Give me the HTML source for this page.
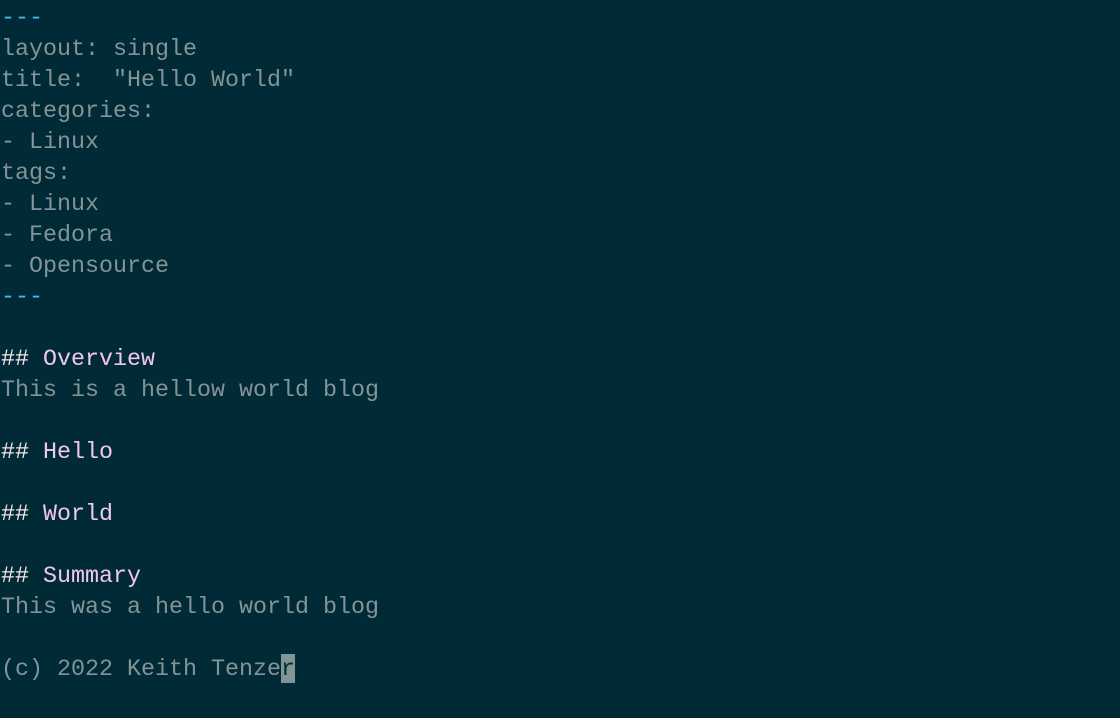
<!DOCTYPE html>
<html><head><meta charset="utf-8"><style>
html,body{margin:0;padding:0;background:#002b36;width:1120px;height:718px;overflow:hidden}
pre{margin:0;position:absolute;left:1px;top:4px;font-family:"Liberation Mono",monospace;font-size:23.33px;line-height:31px;color:#839496}
.b{color:#4fb8e8}.w{color:#f5e6e8}.p{color:#f2c6f2}
.c{background:#839496;color:#002b36;padding-top:3px}
</style></head><body><pre><span class="b">---</span>
layout: single
title:  "Hello World"
categories:
- Linux
tags:
- Linux
- Fedora
- Opensource
<span class="b">---</span>

<span class="w">##</span> <span class="p">Overview</span>
This is a hellow world blog

<span class="w">##</span> <span class="p">Hello</span>

<span class="w">##</span> <span class="p">World</span>

<span class="w">##</span> <span class="p">Summary</span>
This was a hello world blog

(c) 2022 Keith Tenze<span class="c">r</span></pre></body></html>
